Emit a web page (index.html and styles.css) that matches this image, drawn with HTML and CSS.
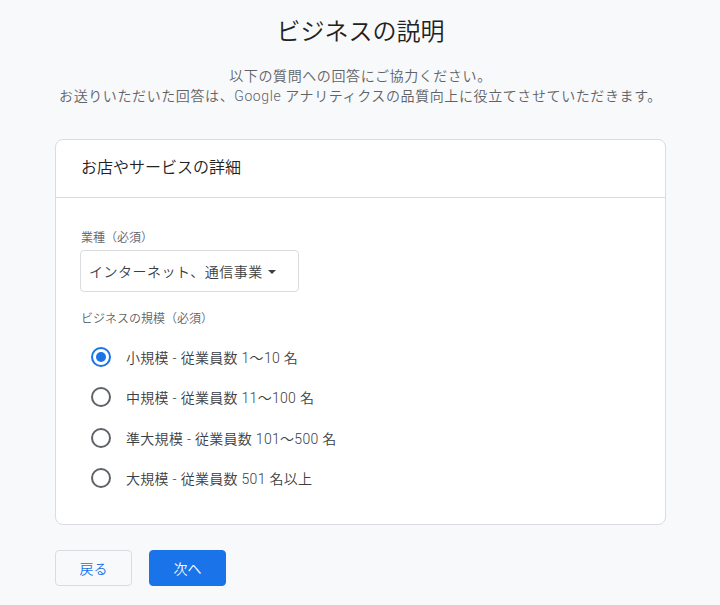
FILE: index.html
```html
<!DOCTYPE html>
<html lang="ja">
<head>
    <meta charset="UTF-8">
    <meta name="viewport" content="width=device-width, initial-scale=1.0">
    <title>ビジネスの説明</title>
    <link rel="stylesheet" href="styles.css">
</head>
<body>
    <div class="page">
        <h1 class="title">ビジネスの説明</h1>
        <div class="subtitle">
            <div class="subtitle-line">以下の質問への回答にご協力ください。</div>
            <div class="subtitle-line">お送りいただいた回答は、Google アナリティクスの品質向上に役立てさせていただきます。</div>
        </div>

        <div class="card">
            <div class="card-header">お店やサービスの詳細</div>
            <div class="card-body">
                <div class="field-label">業種（必須）</div>
                <div class="select">
                    <span>インターネット、通信事業</span>
                    <span class="caret"></span>
                </div>

                <div class="field-label size-label">ビジネスの規模（必須）</div>
                <ul class="radio-list">
                    <li class="radio-row"><span class="radio checked"></span>小規模 - 従業員数 1～10 名</li>
                    <li class="radio-row"><span class="radio"></span>中規模 - 従業員数 11～100 名</li>
                    <li class="radio-row"><span class="radio"></span>準大規模 - 従業員数 101～500 名</li>
                    <li class="radio-row"><span class="radio"></span>大規模 - 従業員数 501 名以上</li>
                </ul>
            </div>
        </div>

        <div class="actions">
            <button class="btn btn-back">戻る</button>
            <button class="btn btn-next">次へ</button>
        </div>
    </div>
</body>
</html>
```

FILE: styles.css
```css
body {
    margin: 0;
    background: #f8f9fa;
    font-family: Roboto, "Noto Sans CJK JP", sans-serif;
    font-weight: 350;
    color: #202124;
}

.page {
    width: 611px;
    margin: 0 auto;
    padding-top: 14px;
    padding-left: 1px;
}

.title {
    margin: 0;
    text-align: center;
    font-size: 24px;
    font-weight: 350;
    line-height: 36px;
    color: #202124;
}

.subtitle {
    margin-top: 16px;
    text-align: center;
    font-size: 14px;
    letter-spacing: 0.6px;
    color: #5f6368;
}

.subtitle-line {
    height: 20px;
    line-height: 20px;
    white-space: nowrap;
}

.card {
    margin-top: 33px;
    background: #fff;
    border: 1px solid #dadce0;
    border-radius: 8px;
}

.card-header {
    height: 57px;
    line-height: 56px;
    padding-left: 25px;
    font-size: 16px;
    border-bottom: 1px solid #dadce0;
}

.card-body {
    padding: 32px 24px 26px;
}

.field-label {
    font-size: 12px;
    line-height: 16px;
    color: #5f6368;
    padding-left: 1px;
}

.select {
    display: inline-flex;
    align-items: center;
    gap: 5px;
    margin-top: 4px;
    height: 40px;
    padding: 0 22px 0 8px;
    border: 1px solid #dadce0;
    border-radius: 4px;
    font-size: 14px;
    letter-spacing: 0.5px;
    color: #3c4043;
}

.caret {
    width: 0;
    height: 0;
    border-left: 4px solid transparent;
    border-right: 4px solid transparent;
    border-top: 4px solid #3c4043;
    margin-top: 2px;
}

.size-label {
    margin-top: 19px;
}

.radio-list {
    list-style: none;
    margin: 10px 0 0;
    padding: 0;
}

.radio-row {
    display: flex;
    align-items: center;
    height: 40.33px;
    padding-left: 11px;
    font-size: 14px;
    letter-spacing: 0.3px;
    color: #3c4043;
}

.radio {
    box-sizing: border-box;
    width: 20px;
    height: 20px;
    margin-right: 15px;
    border: 2px solid #5f6368;
    border-radius: 50%;
    position: relative;
}

.radio.checked {
    border-color: #1a73e8;
}

.radio.checked::after {
    content: "";
    position: absolute;
    left: 3px;
    top: 3px;
    width: 10px;
    height: 10px;
    border-radius: 50%;
    background: #1a73e8;
}

.actions {
    display: flex;
    gap: 17px;
    margin-top: 25px;
}

.btn {
    width: 77px;
    height: 36px;
    border-radius: 4px;
    font-family: inherit;
    font-weight: 350;
    font-size: 14px;
    cursor: pointer;
}

.btn-back {
    background: #f8f9fa;
    border: 1px solid #dadce0;
    color: #1a73e8;
}

.btn-next {
    background: #1a73e8;
    border: 1px solid #1a73e8;
    color: #fff;
}
```
